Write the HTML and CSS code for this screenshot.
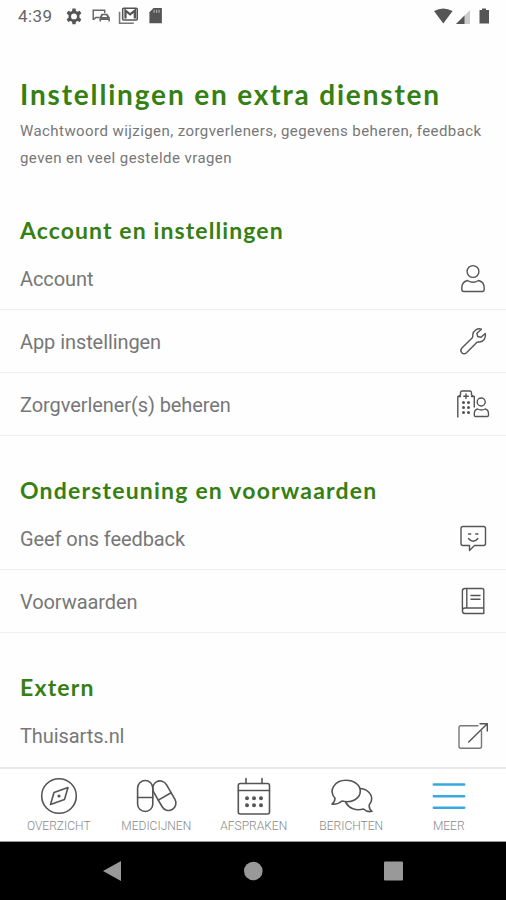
FILE: index.html
```html
<!DOCTYPE html>
<html lang="nl">
<head>
<meta charset="utf-8">
<title>Instellingen en extra diensten</title>
<link rel="stylesheet" href="styles.css">
</head>
<body>
<div class="screen">
  <header class="status">
    <span class="clock">4:39</span>
    <svg class="status-left" viewBox="0 0 100 20">
      <g transform="translate(3.500 1) scale(.75)"><path fill="#555" fill-rule="evenodd" d="M10 2h4l.5 3 2 1.100 2.900-1.200 2 3.500-2.400 1.900v3.400l2.400 1.900-2 3.500-2.900-1.200-2 1.100-.5 3h-4l-.5-3-2-1.100-2.900 1.200-2-3.500L5 13.700v-3.400L2.600 8.400l2-3.500 2.900 1.200 2-1.100zM12 8.200a3.800 3.800 0 1 0 0 7.600 3.800 3.800 0 0 0 0-7.600z"/></g>
      <g transform="translate(-2 -1)"><path d="M33 14.500V5H44V8M33.500 14l2-2H39" fill="none" stroke="#666" stroke-width="1.400"/>
      <path d="M39 16V12L41 8.500h5.500l2.500 3.500v4h-1.500V14.500h-7v1.500z" fill="#666"/><path d="M41.300 11.500l1-1.700h3l1 1.700z" fill="#fff"/></g>
      <g transform="translate(-4 -1)"><path d="M60.300 6.500V17.500H74" fill="none" stroke="#777" stroke-width="1.500"/>
      <rect x="63.300" y="3.200" width="14" height="11.300" rx="1" fill="none" stroke="#555" stroke-width="1.500"/>
      <path d="M66 13V5.500l4.500 3.500L75 5.500V13" fill="none" stroke="#555" stroke-width="2.200"/></g>
      <g transform="translate(-4 -1)"><path d="M93 3h8v14.500H89V7z" fill="#555"/>
      <path d="M93.500 4.500v3M96 4.500v3M98.300 4.500v3" stroke="#bbb" stroke-width="1"/></g>
    </svg>
    <svg class="status-right" viewBox="0 0 60 20">
      <path d="M1 5q9.300-5 18.600 0L10.300 17.500z" fill="#555"/>
      <path d="M37 4v14H23z" fill="#ccc"/><path d="M31.500 9.500v8.500H23z" fill="#555"/>
      <path d="M49 2.500h4V4H56V17.500H46.500V4h2.500z" fill="#555"/>
    </svg>
  </header>

  <main class="content">
    <div class="intro">
      <h1>Instellingen en extra diensten</h1>
      <p>Wachtwoord wijzigen, zorgverleners, gegevens beheren, feedback geven en veel gestelde vragen</p>
    </div>

    <h2 class="h-account">Account en instellingen</h2>
    <div class="row"><span>Account</span>
      <svg class="icon" viewBox="0 0 34 34"><circle cx="17" cy="10.500" r="5.900"/><path d="M11.500 19.500C7.500 20.500 5.800 23 5.800 27v1.500q0 2 2 2h18.400q2 0 2-2V27c0-4-1.700-6.500-5.700-7.500-3.500 2.200-7.500 2.200-11 0z"/></svg>
    </div>
    <div class="row"><span>App instellingen</span>
      <svg class="icon" viewBox="0 0 34 34"><path d="M25.500 5.200c-3.800-1.300-8.300 1.200-8.700 5.600-.1 1.500.2 2.200-.5 3L5.900 24c-3 3.300 1.300 7.600 4.600 4.700l10.200-10.300c.8-.7 1.800-.3 3-.4 4-.3 6.800-4.600 5.500-8.600L25 13.200l-3.300-.7-.8-3.200z"/></svg>
    </div>
    <div class="row"><span>Zorgverlener(s) beheren</span>
      <svg class="icon" viewBox="0 0 34 34"><path d="M1.800 30V9.500L4.500 8V5.800Q4.500 4 6 4h8q1.500 0 1.500 1.800V8L18.300 9.500V20M1.800 9.500H4.500M15.500 9.500h2.800"/><path d="M10 7v4.500M7.800 9.200h4.500"/><path class="dots" d="M7.500 15.500h.01M12.500 15.500h.01M7.500 20.500h.01M12.500 20.500h.01M7.500 25.500h.01M12.500 25.500h.01"/><circle cx="25.200" cy="15" r="4"/><path d="M21.500 22c-2.300.6-3.200 2-3.200 4.700v1.500q0 1.300 1.300 1.300h11.600q1.300 0 1.300-1.300v-1.500c0-2.700-.9-4.100-3.300-4.700-2.500 1.300-5.200 1.300-7.700 0z"/></svg>
    </div>

    <h2 class="h-support">Ondersteuning en voorwaarden</h2>
    <div class="row"><span>Geef ons feedback</span>
      <svg class="icon" viewBox="0 0 34 34"><path d="M7 5.500h20.500q2 0 2 2v15q0 2-2 2H18.500l-5 5v-5H7q-2 0-2-2v-15q0-2 2-2z"/><path d="M12.500 17.500c2.600 3.600 6.800 3.600 9.400 0M12.500 13h2.200M19.700 13h2.200"/></svg>
    </div>
    <div class="row"><span>Voorwaarden</span>
      <svg class="icon" viewBox="0 0 34 34"><path d="M9 4.500h17q1.800 0 1.800 1.800V29.500H9q-2.600 0-2.600-2.800V7Q6.400 4.500 9 4.500zM10.800 4.500v19.500M6.400 26.700Q6.400 24 9 24h18.800"/><path d="M15 11.500h9M15 15.200h9"/></svg>
    </div>

    <h2 class="h-extern">Extern</h2>
    <div class="row last"><span>Thuisarts.nl</span>
      <svg class="icon" viewBox="0 0 34 34"><path d="M22 7.800H5q-2 0-2 2v18.500q0 2 2 2h18.500q2 0 2-2V13" stroke="#777"/><path d="M12.700 24L31 6M24 5.700h7.300V13"/></svg>
    </div>
  </main>

  <nav class="tabs">
    <div class="tab"><svg viewBox="0 0 44 40"><circle cx="22" cy="20" r="17.300"/><path d="M31 11.500L27.500 23.500 13.500 28.500 17 16.500z"/><circle cx="22" cy="20" r=".8"/></svg><span>OVERZICHT</span></div>
    <div class="tab"><svg viewBox="0 0 44 40"><rect x="3.600" y="4.500" width="15.200" height="31" rx="7.600"/><path d="M3.600 21.500h15.200"/><g transform="rotate(-30 30.300 19.700)"><rect x="22.900" y="3.800" width="14.800" height="31.800" rx="7.400"/><path d="M22.900 20.500h14.800"/></g></svg><span>MEDICIJNEN</span></div>
    <div class="tab"><svg viewBox="0 0 44 40"><rect x="6.300" y="7.500" width="31.200" height="30.500" rx="2"/><path d="M6.300 14.500h31.200M14 2.500v5M30 2.500v5"/><path class="bigdots" d="M15 22.300h.01M22 22.300h.01M29 22.300h.01M15 29.300h.01M22 29.300h.01M29 29.300h.01"/></svg><span>AFSPRAKEN</span></div>
    <div class="tab"><svg viewBox="0 0 44 40"><path d="M6 22.300C-.8 14.500 5.500 4.300 17 4.300c8 0 14.300 4.700 14.300 10.800 0 7.800-9.300 12.500-18.300 9.900-2.800 2.500-6 3.500-10 3.200 2.200-1.700 3-3.500 3-5.900z"/><path d="M31 12.500c9.500.8 15 9 9.300 16.200-.4 3 .4 5 2.700 6.600-3.200.8-6.200-.1-8.500-2.300-7.700 2-14.500-.5-17.700-6.500"/></svg><span>BERICHTEN</span></div>
    <div class="tab"><svg class="active" viewBox="0 0 44 40"><path d="M6.800 8.600h30.400M6.800 20.200h30.400M6.800 31.700h30.400"/></svg><span>MEER</span></div>
  </nav>

  <footer class="system">
    <svg viewBox="0 0 22 22"><path d="M1 11L19 1v20z"/></svg>
    <svg viewBox="0 0 22 22"><circle cx="11.300" cy="11" r="9.300"/></svg>
    <svg viewBox="0 0 22 22"><rect x="1" y="1.500" width="19" height="19" rx="1"/></svg>
  </footer>
</div>
</body>
</html>
```
FILE: styles.css
```css
* { box-sizing: border-box; }
body { margin: 0; background: #fefefe; font-family: Roboto, sans-serif; color: #777; }
.screen { width: 506px; height: 900px; display: flex; flex-direction: column; overflow: hidden; }

.status { height: 32px; flex: none; display: flex; align-items: center; padding: 0 13px 0 18px; }
.clock { width: 43px; font-size: 17px; letter-spacing: .4px; color: #666; white-space: nowrap; }
.status-left { width: 104px; height: 20.800px; }
.status-right { width: 60px; height: 20px; margin-left: auto; }

.content { flex: none; height: 735px; }
.intro { height: 144px; padding: 43px 20px 0; }
h1, h2 { margin: 0; font-family: Lato, sans-serif; font-weight: 700; color: #367f13; white-space: nowrap; }
h1 { font-size: 28px; line-height: 38px; letter-spacing: 1.830px; }
p { margin: 5px 0 0; font-size: 15px; line-height: 27px; letter-spacing: .430px; }
h2 { height: 71px; padding: 39px 20px 0; font-size: 23px; line-height: 31px; letter-spacing: 1.200px; }
.h-account { letter-spacing: 1.100px; }

.row { height: 63px; padding: 0 16px 0 20px; display: flex; align-items: center; justify-content: space-between; border-bottom: 1px solid #eee; font-size: 20px; letter-spacing: -.080px; }
.row span { padding-top: 2px; }
.row.last { border-bottom-color: transparent; }
.icon { width: 34px; height: 34px; }
.icon, .tab svg { fill: none; stroke: #555; stroke-width: 1.400; stroke-linecap: round; stroke-linejoin: round; }
.icon .dots { stroke-width: 3; }

.tabs { flex: none; height: 75px; padding: 7px 8px 0 10px; display: grid; grid-template-columns: repeat(5, 97.500px); border-top: 2px solid #e8e8e8; border-bottom: 1px solid #999; background: #fff; }
.tab { display: flex; flex-direction: column; align-items: center; font-size: 12px; font-weight: 300; line-height: 18px; letter-spacing: .020px; color: #888; }
.tab svg { width: 44px; height: 40px; stroke-width: 1.600; margin-bottom: 1px; }
.tab .bigdots { stroke-width: 4; }
.tab svg.active { stroke: #35a9e0; stroke-width: 2.500; }

.system { flex: 1; background: #000; display: flex; justify-content: center; align-items: center; gap: 118.500px; }
.system svg { width: 22px; height: 22px; fill: #999; }
```
